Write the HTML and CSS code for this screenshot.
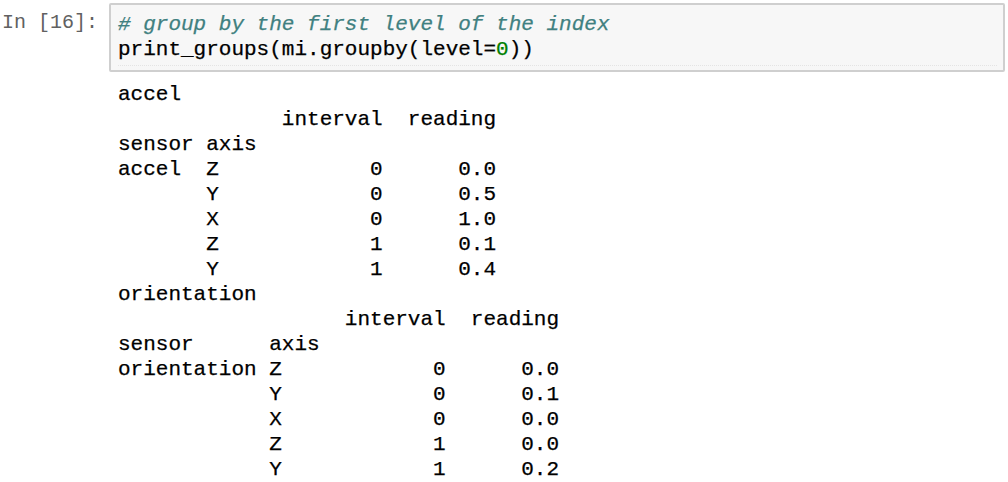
FILE: index.html
```html
<!DOCTYPE html>
<html>
<head>
<meta charset="utf-8">
<link rel="stylesheet" href="styles.css">
</head>
<body>
<div class="cell">
  <div class="prompt">In [16]:</div>
  <div class="input"><pre class="code"><span class="c"># group by the first level of the index</span>
print_groups(mi.groupby(level=<span class="n">0</span>))</pre></div>
</div>
<div class="output">
<pre class="out">accel
             interval  reading
sensor axis
accel  Z            0      0.0
       Y            0      0.5
       X            0      1.0
       Z            1      0.1
       Y            1      0.4
orientation
                  interval  reading
sensor      axis
orientation Z            0      0.0
            Y            0      0.1
            X            0      0.0
            Z            1      0.0
            Y            1      0.2</pre>
</div>
</body>
</html>
```
FILE: styles.css
```css
html, body {
  margin: 0;
  padding: 0;
  background: #ffffff;
}
pre {
  margin: 0;
  font-family: "Liberation Mono", "DejaVu Sans Mono", monospace;
  font-size: 21px;
  line-height: 25px;
  color: #000;
  -webkit-text-stroke: 0.25px #000;
}
.cell {
  display: flex;
  align-items: flex-start;
  padding-top: 3px;
}
.prompt {
  width: 109px;
  flex: none;
  box-sizing: border-box;
  padding-left: 2px;
  padding-top: 7px;
  font-family: "Liberation Mono", "DejaVu Sans Mono", monospace;
  font-size: 20px;
  line-height: 25px;
  color: #616161;
}
.input {
  flex: 1;
  margin-right: 3px;
  background: #f7f7f7;
  border: 2px solid #cfcfcf;
  border-radius: 2px;
  padding: 7px 0 0 7px;
}
.code {
  padding-bottom: 3px;
  margin-bottom: 4px;
  margin-right: 6px;
  border-bottom: 1px dotted #e4e4e4;
}
.c {
  color: #408080;
  font-style: italic;
  -webkit-text-stroke: 0.25px #408080;
}
.n {
  color: #008000;
  -webkit-text-stroke: 0.25px #008000;
}
.output {
  padding: 10px 0 0 118px;
}
```
